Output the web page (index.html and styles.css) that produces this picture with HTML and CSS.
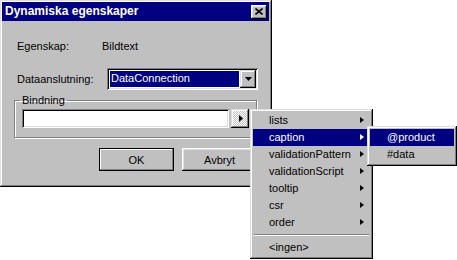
FILE: index.html
```html
<!DOCTYPE html>
<html lang="sv">
<head>
    <meta charset="UTF-8">
    <title>Dynamiska egenskaper</title>
    <link rel="stylesheet" href="styles.css">
</head>
<body>
    <div class="window">
        <div class="titlebar">
            <span class="title">Dynamiska egenskaper</span>
            <button class="close">
                <svg width="8" height="7" viewBox="0 0 8 7"><path d="M0.5 0.5L7.5 6.5M7.5 0.5L0.5 6.5" stroke="#000" stroke-width="1.6"/></svg>
            </button>
        </div>
        <div class="content">
            <div class="row row-prop">
                <span class="label label-prop">Egenskap:</span>
                <span>Bildtext</span>
            </div>
            <div class="row row-conn">
                <span class="label label-conn">Dataanslutning:</span>
                <div class="combo">
                    <div class="combo-value"><span>DataConnection</span></div>
                    <div class="combo-btn">
                        <svg width="7" height="4" viewBox="0 0 7 4"><path d="M0 0H7L3.5 4Z" fill="#000"/></svg>
                    </div>
                </div>
            </div>
            <fieldset class="group">
                <legend>Bindning</legend>
                <div class="bind-row">
                    <div class="field"></div>
                    <div class="pick-btn">
                        <svg width="4" height="7" viewBox="0 0 4 7"><path d="M0 0L4 3.5L0 7Z" fill="#000"/></svg>
                    </div>
                </div>
            </fieldset>
            <div class="buttons">
                <button class="btn btn-default">OK</button>
                <button class="btn">Avbryt</button>
            </div>
        </div>
    </div>

    <ul class="menu main-menu">
        <li class="item">lists<span class="arrow"></span></li>
        <li class="item active">caption<span class="arrow"></span></li>
        <li class="item">validationPattern<span class="arrow"></span></li>
        <li class="item">validationScript<span class="arrow"></span></li>
        <li class="item">tooltip<span class="arrow"></span></li>
        <li class="item">csr<span class="arrow"></span></li>
        <li class="item">order<span class="arrow"></span></li>
        <li class="separator"></li>
        <li class="item">&lt;ingen&gt;</li>
    </ul>

    <ul class="menu sub-menu">
        <li class="item active">@product</li>
        <li class="item">#data</li>
    </ul>
</body>
</html>
```

FILE: styles.css
```css
* {
    box-sizing: border-box;
}

body {
    margin: 0;
    background-color: #fff;
    font-family: "Liberation Sans", Arial, sans-serif;
    font-size: 11px;
    line-height: 13px;
    color: #000;
}

.window {
    width: 272px;
    height: 187px;
    padding: 2px 3px 3px 2px;
    background-color: #c0c0c0;
    box-shadow: inset -1px -1px #000, inset 1px 1px #dfdfdf,
                inset -2px -2px #808080, inset 2px 2px #fff;
}

.titlebar {
    display: flex;
    align-items: center;
    justify-content: space-between;
    height: 19px;
    padding: 0 2px 0 3px;
    background-color: #000080;
}

.title {
    color: #fff;
    font-weight: bold;
    font-size: 12px;
}

.close {
    display: flex;
    align-items: center;
    justify-content: center;
    width: 16px;
    height: 14px;
    padding: 0;
    border: 0;
    background-color: #c0c0c0;
    box-shadow: inset -1px -1px #000, inset 1px 1px #fff,
                inset -2px -2px #808080, inset 2px 2px #dfdfdf;
}

.content {
    padding: 19px 0 0 12px;
}

.row {
    display: flex;
    align-items: center;
    margin-left: 3px;
}

.label-prop {
    width: 85px;
}

.label-conn {
    width: 90px;
}

.row-conn {
    margin-top: 15px;
}

/* combobox */
.combo {
    display: flex;
    width: 151px;
    height: 22px;
    padding: 2px;
    background-color: #fff;
    box-shadow: inset 1px 1px #808080, inset -1px -1px #fff,
                inset 2px 2px #000, inset -2px -2px #dfdfdf;
}

.combo-value {
    flex: 1;
    padding: 1px;
}

.combo-value span {
    display: block;
    height: 16px;
    padding: 1px 0 0 1px;
    background-color: #000080;
    color: #fff;
}

.combo-btn,
.pick-btn {
    display: flex;
    align-items: center;
    justify-content: center;
    background-color: #c0c0c0;
    box-shadow: inset -1px -1px #000, inset 1px 1px #dfdfdf,
                inset -2px -2px #808080, inset 2px 2px #fff;
}

.combo-btn {
    width: 16px;
    height: 18px;
}

/* group box */
.group {
    width: 243px;
    min-width: 0;
    margin: 4px 0 0;
    padding: 2px 7px 9px 7px;
    border: 1px solid #808080;
    box-shadow: inset 1px 1px #fff, 1px 1px #fff;
}

.group legend {
    padding: 0 2px;
    margin-left: -2px;
}

.bind-row {
    display: flex;
    gap: 2px;
}

.field {
    width: 207px;
    height: 19px;
    background-color: #fff;
    box-shadow: inset 1px 1px #808080, inset -1px -1px #fff,
                inset 2px 2px #000, inset -2px -2px #dfdfdf;
}

.pick-btn {
    width: 18px;
    height: 19px;
    padding-left: 1px;
    background-color: #fff;
    background-image: repeating-conic-gradient(#c0c0c0 0 25%, #fff 0 50%);
    background-size: 2px 2px;
}

/* buttons */
.buttons {
    display: flex;
    gap: 8px;
    margin: 10px 0 0 85px;
}

.btn {
    width: 75px;
    height: 23px;
    padding: 0;
    border: 0;
    background-color: #c0c0c0;
    font-family: inherit;
    font-size: 11px;
    color: #000;
    box-shadow: inset -1px -1px #000, inset 1px 1px #fff,
                inset -2px -2px #808080, inset 2px 2px #dfdfdf;
}

.btn-default {
    box-shadow: inset 0 0 0 1px #000, inset -2px -2px #808080, inset 2px 2px #fff;
}

/* popup menus */
.menu {
    position: absolute;
    margin: 0;
    padding: 3px;
    list-style: none;
    background-color: #c0c0c0;
    box-shadow: inset -1px -1px #000, inset 1px 1px #dfdfdf,
                inset -2px -2px #808080, inset 2px 2px #fff;
}

.main-menu {
    left: 250px;
    top: 109px;
    width: 123px;
    height: 150px;
}

.sub-menu {
    left: 367px;
    top: 126px;
    width: 90px;
    height: 40px;
}

.item {
    position: relative;
    height: 17px;
    padding: 2px 0 0 16px;
}

.sub-menu .item {
    padding-left: 17px;
}

.item.active {
    background-color: #000080;
    color: #fff;
}

.arrow {
    position: absolute;
    right: 6px;
    top: 5px;
    width: 0;
    height: 0;
    border-top: 3.5px solid transparent;
    border-bottom: 3.5px solid transparent;
    border-left: 4px solid #000;
}

.item.active .arrow {
    border-left-color: #fff;
}

.separator {
    height: 8px;
    padding-top: 3px;
}

.separator::before {
    content: "";
    display: block;
    margin: 0 1px;
    height: 1px;
    background-color: #808080;
    box-shadow: 0 1px #fff;
}
```
